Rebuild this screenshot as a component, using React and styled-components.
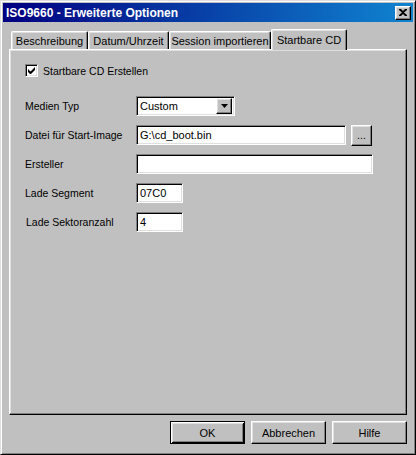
import styled, { createGlobalStyle, css } from "styled-components";

const GlobalStyle = createGlobalStyle`
  html, body {
    margin: 0;
    padding: 0;
    background: #c0c0c0;
  }
  body {
    font-family: "Liberation Sans", Arial, sans-serif;
    font-size: 10.5px;
    color: #000;
  }
`;

const raised = css`
  border: 1px solid;
  border-color: #fff #000 #000 #fff;
  box-shadow: inset -1px -1px #808080, inset 1px 1px #dfdfdf;
`;

const sunken = css`
  border: 1px solid;
  border-color: #808080 #fff #fff #808080;
  box-shadow: inset 1px 1px #000, inset -1px -1px #dfdfdf;
`;

const Window = styled.div`
  box-sizing: border-box;
  width: 416px;
  height: 455px;
  display: flex;
  flex-direction: column;
  padding: 2px;
  background: #c0c0c0;
  border: 1px solid;
  border-color: #dfdfdf #000 #000 #dfdfdf;
  box-shadow: inset 1px 1px #fff, inset -1px -1px #808080;
`;

const TitleBar = styled.div`
  height: 19px;
  display: flex;
  align-items: center;
  justify-content: space-between;
  padding-left: 3px;
  background: linear-gradient(90deg, #000080, #1084d0);
`;

const Title = styled.span`
  color: #fff;
  font-weight: bold;
  font-size: 12px;
`;

const CloseButton = styled.div`
  box-sizing: border-box;
  width: 16px;
  height: 14px;
  margin-right: 2px;
  display: flex;
  align-items: center;
  justify-content: center;
  background: #c0c0c0;
  ${raised}
`;

const Body = styled.div`
  flex: 1;
  display: flex;
  flex-direction: column;
  padding: 7px 6px 8px;
`;

const TabStrip = styled.div`
  height: 20px;
  display: flex;
  align-items: flex-end;
  padding-left: 2px;
  position: relative;
  z-index: 1;
`;

const Tab = styled.div`
  box-sizing: border-box;
  width: ${(p) => p.$w}px;
  height: ${(p) => (p.$active ? 21 : 18)}px;
  margin-bottom: ${(p) => (p.$active ? -1 : 0)}px;
  display: flex;
  align-items: ${(p) => (p.$active ? "flex-start" : "center")};
  justify-content: center;
  padding-top: ${(p) => (p.$active ? 4 : 1)}px;
  font-size: 11px;
  background: #c0c0c0;
  border-top: 1px solid #fff;
  border-left: 1px solid #fff;
  border-right: 1px solid #000;
  border-radius: 2px 2px 0 0;
  box-shadow: inset -1px 0 #808080, inset 1px 1px #dfdfdf;
`;

const Panel = styled.div`
  flex: 1;
  display: flex;
  flex-direction: column;
  padding: 14px 15px;
  border: 1px solid;
  border-color: #fff #000 #000 #fff;
  box-shadow: inset -1px -1px #808080, inset 1px 1px #dfdfdf;
`;

const CheckRow = styled.label`
  display: flex;
  align-items: center;
  gap: 5px;
  height: 13px;
`;

const CheckBox = styled.span`
  box-sizing: border-box;
  width: 13px;
  height: 13px;
  display: flex;
  align-items: center;
  justify-content: center;
  background: #fff;
  ${sunken}
`;

const Form = styled.div`
  margin-top: 19px;
  display: grid;
  grid-template-columns: 111px auto;
  grid-auto-rows: 20px;
  row-gap: 9px;
  align-items: center;
`;

const Label = styled.span`
  padding-left: ${(p) => p.$indent || 0}px;
`;

const Controls = styled.div`
  display: flex;
  align-items: center;
  gap: 5px;
`;

const Field = styled.div`
  box-sizing: border-box;
  width: ${(p) => p.$w}px;
  height: 20px;
  display: flex;
  align-items: center;
  padding-left: 3px;
  font-size: 11px;
  background: #fff;
  ${sunken}
`;

const Combo = styled(Field)`
  justify-content: space-between;
  padding-right: 2px;
`;

const DropButton = styled.div`
  box-sizing: border-box;
  width: 16px;
  height: 16px;
  display: flex;
  align-items: center;
  justify-content: center;
  background: #c0c0c0;
  ${raised}
`;

const SmallButton = styled.div`
  box-sizing: border-box;
  width: 21px;
  height: 21px;
  display: flex;
  align-items: flex-end;
  justify-content: center;
  padding-bottom: 4px;
  background: #c0c0c0;
  ${raised}
`;

const ButtonRow = styled.div`
  margin-top: 6px;
  display: flex;
  justify-content: flex-end;
  gap: 6px;
`;

const Button = styled.div`
  box-sizing: border-box;
  width: 75px;
  height: 23px;
  display: flex;
  align-items: center;
  justify-content: center;
  font-size: 11px;
  background: #c0c0c0;
  ${raised}
  ${(p) =>
    p.$default &&
    css`
      border: 1px solid #000;
      box-shadow: inset 1px 1px #fff, inset -1px -1px #000,
        inset 2px 2px #dfdfdf, inset -2px -2px #808080;
    `}
`;

const tabs = [
  { label: "Beschreibung", w: 77 },
  { label: "Datum/Uhrzeit", w: 81 },
  { label: "Session importieren", w: 102 },
  { label: "Startbare CD", w: 76, active: true },
];

export default function App() {
  return (
    <>
      <GlobalStyle />
      <Window>
        <TitleBar>
          <Title>ISO9660 - Erweiterte Optionen</Title>
          <CloseButton>
            <svg width="8" height="7" viewBox="0 0 8 7">
              <path d="M0 0h2l2 2 2-2h2v1L5 3.5 8 6v1H6L4 5 2 7H0V6l3-2.5L0 1z" fill="#000" />
            </svg>
          </CloseButton>
        </TitleBar>
        <Body>
          <TabStrip>
            {tabs.map((t) => (
              <Tab key={t.label} $w={t.w} $active={t.active}>
                {t.label}
              </Tab>
            ))}
          </TabStrip>
          <Panel>
            <CheckRow>
              <CheckBox>
                <svg width="7" height="7" viewBox="0 0 7 7">
                  <path d="M0 2v3l2 2h1l4-4V0L2.5 4.5z" fill="#000" />
                </svg>
              </CheckBox>
              Startbare CD Erstellen
            </CheckRow>
            <Form>
              <Label>Medien Typ</Label>
              <Combo $w={99}>
                Custom
                <DropButton>
                  <svg width="7" height="4" viewBox="0 0 7 4">
                    <path d="M0 0h7L3.5 4z" fill="#000" />
                  </svg>
                </DropButton>
              </Combo>

              <Label>Datei für Start-Image</Label>
              <Controls>
                <Field $w={210}>G:\cd_boot.bin</Field>
                <SmallButton>...</SmallButton>
              </Controls>

              <Label>Ersteller</Label>
              <Field $w={237} />

              <Label>Lade Segment</Label>
              <Field $w={47}>07C0</Field>

              <Label $indent={1}>Lade Sektoranzahl</Label>
              <Field $w={47}>4</Field>
            </Form>
          </Panel>
          <ButtonRow>
            <Button $default>OK</Button>
            <Button>Abbrechen</Button>
            <Button>Hilfe</Button>
          </ButtonRow>
        </Body>
      </Window>
    </>
  );
}
